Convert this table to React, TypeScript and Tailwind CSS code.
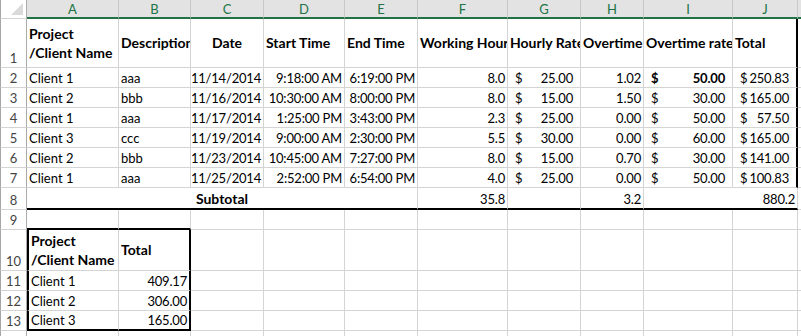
import type { ReactNode } from 'react'

type Side = 'thin' | 'thick' | 'none'

const rightCls: Record<Side, string> = {
  thin: 'border-r border-r-[#d4d4d4]',
  thick: 'border-r-2 border-r-black',
  none: '',
}
const bottomCls: Record<Side, string> = {
  thin: 'border-b border-b-[#d4d4d4]',
  thick: 'border-b-2 border-b-black',
  none: '',
}
const alignCls = {
  left: 'justify-start',
  right: 'justify-end tracking-[-0.2px]',
  center: 'justify-center',
}

function Cell({
  children,
  r = 'thin',
  b = 'thin',
  left = false,
  align = 'left',
  middle = false,
  bold = false,
  className = '',
}: {
  children?: ReactNode
  r?: Side
  b?: Side
  left?: boolean
  align?: 'left' | 'right' | 'center'
  middle?: boolean
  bold?: boolean
  className?: string
}) {
  return (
    <div
      className={`flex overflow-hidden whitespace-nowrap px-[2px] text-black ${middle ? 'items-center' : 'items-end'} ${alignCls[align]} ${rightCls[r]} ${bottomCls[b]} ${left ? 'border-l-2 border-l-black' : ''} ${bold ? 'text-[14px] font-bold' : ''} ${className}`}
    >
      {children}
    </div>
  )
}

function Money({ value, bold = false }: { value: string; bold?: boolean }) {
  return (
    <div className={`flex w-full justify-between px-[5px] tracking-[-0.2px] ${bold ? 'font-bold' : ''}`}>
      <span>$</span>
      <span>{value}</span>
    </div>
  )
}

function RowNum({ n, b = 'thin' }: { n?: string; b?: 'thin' | 'none' }) {
  return (
    <div
      className={`flex items-end justify-center border-l border-l-[#a6a6a6] border-r border-r-[#ababab] bg-white text-[#444] ${b === 'thin' ? 'border-b border-b-[#d4d4d4]' : ''}`}
    >
      {n}
    </div>
  )
}

const letters = ['A', 'B', 'C', 'D', 'E', 'F', 'G', 'H', 'I', 'J', '']

const data = [
  ['2', 'Client 1', 'aaa', '11/14/2014', '9:18:00 AM', '6:19:00 PM', '8.0', '25.00', '1.02', '50.00', '250.83'],
  ['3', 'Client 2', 'bbb', '11/16/2014', '10:30:00 AM', '8:00:00 PM', '8.0', '15.00', '1.50', '30.00', '165.00'],
  ['4', 'Client 1', 'aaa', '11/17/2014', '1:25:00 PM', '3:43:00 PM', '2.3', '25.00', '0.00', '50.00', '57.50'],
  ['5', 'Client 3', 'ccc', '11/19/2014', '9:00:00 AM', '2:30:00 PM', '5.5', '30.00', '0.00', '60.00', '165.00'],
  ['6', 'Client 2', 'bbb', '11/23/2014', '10:45:00 AM', '7:27:00 PM', '8.0', '15.00', '0.70', '30.00', '141.00'],
  ['7', 'Client 1', 'aaa', '11/25/2014', '2:52:00 PM', '6:54:00 PM', '4.0', '25.00', '0.00', '50.00', '100.83'],
]

const summary = [
  ['11', 'Client 1', '409.17'],
  ['12', 'Client 2', '306.00'],
  ['13', 'Client 3', '165.00'],
]

export default function App() {
  return (
    <div className="h-[336px] w-[801px] overflow-hidden bg-white font-['Lato',sans-serif] text-[13px] leading-[18px]">
      <div className="grid grid-cols-[27px_92px_72px_73px_81px_73px_90px_73px_63px_89px_65px_1fr] grid-rows-[19px_49px_20px_20px_20px_20px_20px_20px_22px_20px_41px_20px_20px_20px_20px]">
        {/* Column headers */}
        <div className="relative border-l border-l-[#a6a6a6] border-r border-r-[#ababab] border-b border-b-[#d4d4d4] bg-white">
          <svg className="absolute bottom-[3px] right-[3px]" width="12" height="12" viewBox="0 0 12 12">
            <polygon points="12,0 12,12 0,12" fill="#dadada" />
          </svg>
        </div>
        {letters.map((l, i) => (
          <div
            key={i}
            className="flex items-center justify-center border-r border-r-[#c8c8c8] border-b-2 border-b-[#217346] bg-[#e3e3e3] text-[#217346]"
          >
            {l}
          </div>
        ))}

        {/* Row 1 */}
        <RowNum n="1" />
        <Cell middle bold>
          <div className="flex flex-col leading-[19px]">
            <span>Project</span>
            <span>/Client Name</span>
          </div>
        </Cell>
        <Cell middle bold>Description</Cell>
        <Cell middle bold align="center">Date</Cell>
        <Cell middle bold>Start Time</Cell>
        <Cell middle bold>End Time</Cell>
        <Cell middle bold>Working Hours</Cell>
        <Cell middle bold>Hourly Rate</Cell>
        <Cell middle bold>Overtime</Cell>
        <Cell middle bold>Overtime rate</Cell>
        <Cell middle bold r="thick">Total</Cell>
        <Cell />

        {/* Rows 2-7 */}
        {data.map((row) => [
          <RowNum key={row[0] + 'n'} n={row[0]} />,
          <Cell key={row[0] + 'a'}>{row[1]}</Cell>,
          <Cell key={row[0] + 'b'}>{row[2]}</Cell>,
          <Cell key={row[0] + 'c'} align="right">{row[3]}</Cell>,
          <Cell key={row[0] + 'd'} align="right">{row[4]}</Cell>,
          <Cell key={row[0] + 'e'} align="right">{row[5]}</Cell>,
          <Cell key={row[0] + 'f'} align="right">{row[6]}</Cell>,
          <Cell key={row[0] + 'g'}><Money value={row[7]} /></Cell>,
          <Cell key={row[0] + 'h'} align="right">{row[8]}</Cell>,
          <Cell key={row[0] + 'i'}><Money value={row[9]} bold={row[0] === '2'} /></Cell>,
          <Cell key={row[0] + 'j'} r="thick"><Money value={row[10]} /></Cell>,
          <Cell key={row[0] + 'k'} />,
        ])}

        {/* Row 8 subtotal */}
        <RowNum n="8" />
        <Cell b="thick" bold align="center" className="col-span-5">Subtotal</Cell>
        <Cell b="thick" align="right">35.8</Cell>
        <Cell b="thick" />
        <Cell b="thick" align="right">3.2</Cell>
        <Cell b="thick" align="right" className="col-span-2">880.2</Cell>
        <Cell />

        {/* Row 9 */}
        <RowNum n="9" />
        <Cell b="thick" />
        <Cell b="thick" />
        {Array.from({ length: 9 }).map((_, i) => (
          <Cell key={'r9' + i} />
        ))}

        {/* Row 10 */}
        <RowNum n="10" />
        <Cell left middle bold>
          <div className="flex flex-col leading-[19px]">
            <span>Project</span>
            <span>/Client Name</span>
          </div>
        </Cell>
        <Cell r="thick" middle bold>Total</Cell>
        {Array.from({ length: 9 }).map((_, i) => (
          <Cell key={'r10' + i} />
        ))}

        {/* Rows 11-13 */}
        {summary.map((row, idx) => {
          const last = idx === summary.length - 1
          return [
            <RowNum key={row[0] + 'n'} n={row[0]} />,
            <Cell key={row[0] + 'a'} left b={last ? 'thick' : 'thin'}>{row[1]}</Cell>,
            <Cell key={row[0] + 'b'} r="thick" b={last ? 'thick' : 'thin'} align="right">{row[2]}</Cell>,
            ...Array.from({ length: 9 }).map((_, i) => <Cell key={row[0] + 'x' + i} />),
          ]
        })}

        {/* Row 14 (partial) */}
        <RowNum n="14" b="none" />
        {Array.from({ length: 11 }).map((_, i) => (
          <Cell key={'r14' + i} b="none" />
        ))}
      </div>
    </div>
  )
}
